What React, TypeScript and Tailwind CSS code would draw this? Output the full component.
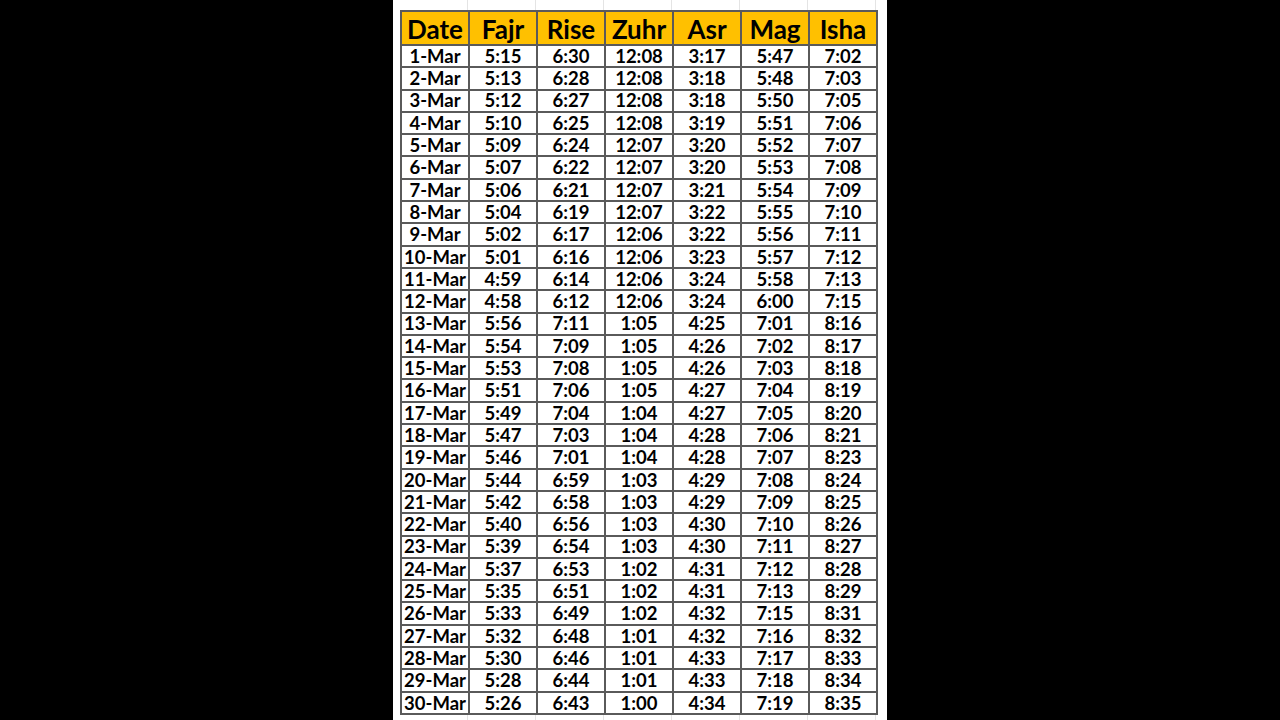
import React from "react";

const rows: string[][] = [
  ["1-Mar", "5:15", "6:30", "12:08", "3:17", "5:47", "7:02"],
  ["2-Mar", "5:13", "6:28", "12:08", "3:18", "5:48", "7:03"],
  ["3-Mar", "5:12", "6:27", "12:08", "3:18", "5:50", "7:05"],
  ["4-Mar", "5:10", "6:25", "12:08", "3:19", "5:51", "7:06"],
  ["5-Mar", "5:09", "6:24", "12:07", "3:20", "5:52", "7:07"],
  ["6-Mar", "5:07", "6:22", "12:07", "3:20", "5:53", "7:08"],
  ["7-Mar", "5:06", "6:21", "12:07", "3:21", "5:54", "7:09"],
  ["8-Mar", "5:04", "6:19", "12:07", "3:22", "5:55", "7:10"],
  ["9-Mar", "5:02", "6:17", "12:06", "3:22", "5:56", "7:11"],
  ["10-Mar", "5:01", "6:16", "12:06", "3:23", "5:57", "7:12"],
  ["11-Mar", "4:59", "6:14", "12:06", "3:24", "5:58", "7:13"],
  ["12-Mar", "4:58", "6:12", "12:06", "3:24", "6:00", "7:15"],
  ["13-Mar", "5:56", "7:11", "1:05", "4:25", "7:01", "8:16"],
  ["14-Mar", "5:54", "7:09", "1:05", "4:26", "7:02", "8:17"],
  ["15-Mar", "5:53", "7:08", "1:05", "4:26", "7:03", "8:18"],
  ["16-Mar", "5:51", "7:06", "1:05", "4:27", "7:04", "8:19"],
  ["17-Mar", "5:49", "7:04", "1:04", "4:27", "7:05", "8:20"],
  ["18-Mar", "5:47", "7:03", "1:04", "4:28", "7:06", "8:21"],
  ["19-Mar", "5:46", "7:01", "1:04", "4:28", "7:07", "8:23"],
  ["20-Mar", "5:44", "6:59", "1:03", "4:29", "7:08", "8:24"],
  ["21-Mar", "5:42", "6:58", "1:03", "4:29", "7:09", "8:25"],
  ["22-Mar", "5:40", "6:56", "1:03", "4:30", "7:10", "8:26"],
  ["23-Mar", "5:39", "6:54", "1:03", "4:30", "7:11", "8:27"],
  ["24-Mar", "5:37", "6:53", "1:02", "4:31", "7:12", "8:28"],
  ["25-Mar", "5:35", "6:51", "1:02", "4:31", "7:13", "8:29"],
  ["26-Mar", "5:33", "6:49", "1:02", "4:32", "7:15", "8:31"],
  ["27-Mar", "5:32", "6:48", "1:01", "4:32", "7:16", "8:32"],
  ["28-Mar", "5:30", "6:46", "1:01", "4:33", "7:17", "8:33"],
  ["29-Mar", "5:28", "6:44", "1:01", "4:33", "7:18", "8:34"],
  ["30-Mar", "5:26", "6:43", "1:00", "4:34", "7:19", "8:35"],
];

const headers = ["Date", "Fajr", "Rise", "Zuhr", "Asr", "Mag", "Isha"];

export default function App() {
  return (
    <div className="w-[1280px] h-[720px] bg-black flex justify-center overflow-hidden">
      <div className="w-[494px] h-[720px] bg-white pl-[7px] flex flex-col font-['Lato','Liberation_Sans',sans-serif] text-black">
        <div className="flex h-[10px] shrink-0">
          {headers.map((k) => (
            <div key={k} className="w-[68px] border-r border-[#e4e4e4]" />
          ))}
        </div>
        <table className="border-collapse table-fixed w-[477px] shrink-0">
          <thead>
            <tr className="h-[34px] bg-[#ffc000]">
              {headers.map((h) => (
                <th
                  key={h}
                  className="border-2 border-[#5a5a5a] w-[68px] p-0 pt-[2px] text-center text-[26px] font-bold leading-none"
                >
                  {h}
                </th>
              ))}
            </tr>
          </thead>
          <tbody>
            {rows.map((r) => (
              <tr key={r[0]} className="h-[22.3px]">
                {r.map((c, i) => (
                  <td
                    key={i}
                    className="border-2 border-[#5a5a5a] p-0 text-center text-[18.5px] font-bold leading-none whitespace-nowrap"
                  >
                    {c}
                  </td>
                ))}
              </tr>
            ))}
          </tbody>
        </table>
        <div className="flex flex-1">
          {headers.map((k) => (
            <div key={k} className="w-[68px] border-r border-[#e4e4e4]" />
          ))}
        </div>
      </div>
    </div>
  );
}
